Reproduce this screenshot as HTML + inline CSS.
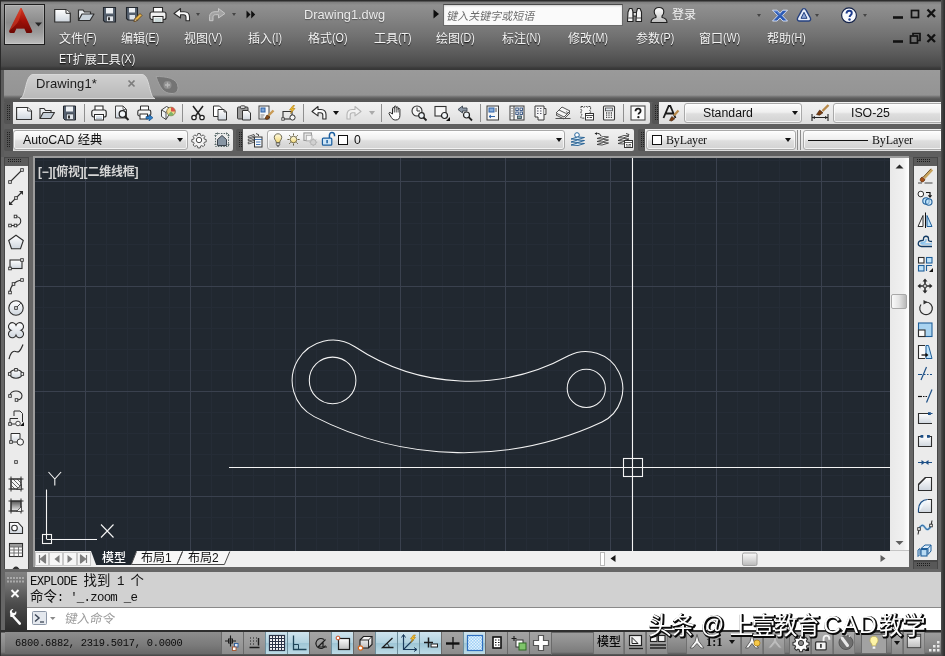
<!DOCTYPE html>
<html lang="zh"><head><meta charset="utf-8"><title>AutoCAD - Drawing1.dwg</title>
<style>
html,body{margin:0;padding:0;background:#3a3a3a;}
body{width:945px;height:656px;overflow:hidden;font-family:"Liberation Sans","Noto Sans CJK SC",sans-serif;font-size:12px;color:#111;}
#app{position:absolute;left:0;top:0;width:945px;height:656px;overflow:hidden;background:#666;will-change:transform;}
#app div{position:absolute;box-sizing:border-box;}
#app:before{content:"";position:absolute;left:0;top:70px;width:1px;height:586px;background:#303030;z-index:5;}
#app:after{content:"";position:absolute;right:0;top:70px;width:4px;height:586px;background:linear-gradient(90deg,#4f4f4f,#3a3a3a 50%,#2c2c2c);z-index:5;}
svg{display:block;overflow:visible;}
.cj{font-family:"Liberation Sans","Noto Sans CJK SC",sans-serif;}
.cjm{font-family:"Liberation Sans","Noto Sans CJK SC",sans-serif;font-weight:500;}
svg.la{display:inline-block;vertical-align:-0.13em;fill:currentColor;overflow:visible;}
.ic{width:18px;height:18px;}
.ic>svg{width:100%;height:100%;}

/* ---- title ---- */
#title{left:0;top:0;width:945px;height:70px;
 background:linear-gradient(#2c2c2c 0,#2c2c2c 1px,#7d7d7d 2px,#909090 5px,#868686 16px,#717171 36px,#5a5a5a 54px,#484848 66px,#3a3a3a 68px,#363636 70px);}
#title:before{content:"";position:absolute;left:0;top:0;width:1px;height:70px;background:#2a2a2a;}
#title:after{content:"";position:absolute;right:0;top:0;width:4px;height:70px;background:linear-gradient(90deg,#555,#2a2a2a);}
#appbtn{left:4px;top:4px;width:41px;height:41px;border:1px solid #1e1e1e;
 background:linear-gradient(#a9a9a9,#8b8b8b 45%,#9a9a9a 70%,#bdbdbd);box-shadow:inset 0 0 0 1px rgba(255,255,255,.18);}
#doctitle{left:304px;top:7px;font-size:12.8px;color:#ececec;letter-spacing:0;white-space:nowrap;text-shadow:0 1px 1px rgba(0,0,0,.35);}
#search{left:443px;top:4px;width:180px;height:22px;background:#fafafa;border:1px solid #6a6a6a;border-top-color:#4a4a4a;box-shadow:inset 0 1px 2px rgba(0,0,0,.18);}
#search i{position:absolute;left:3px;top:6px;font-size:11px;line-height:1;color:#6c6c6c;white-space:nowrap;font-style:normal;transform:skewX(-12deg);}
#login{left:672px;top:8px;font-size:12px;line-height:14px;color:#f2f2f2;white-space:nowrap;}
.menu{font-size:12px;letter-spacing:0;color:#f4f4f4;white-space:nowrap;line-height:16px;text-shadow:0 1px 1px rgba(0,0,0,.45);}
.menu svg{filter:drop-shadow(0 1px .5px rgba(0,0,0,.4));}
.tri-d{width:0;height:0;border-left:3px solid transparent;border-right:3px solid transparent;border-top:4px solid #111;}
.tri-d.lt{border-top-color:#454545;border-left-width:2.5px;border-right-width:2.5px;border-top-width:3.5px;}
.vsep{width:1px;background:rgba(60,60,60,.25);box-shadow:1px 0 0 rgba(255,255,255,.08);}

/* ---- file tab strip ---- */
#tabstrip{left:0;top:70px;width:945px;height:32px;background:linear-gradient(#9a9a9a 0,#949494 25px,#6e6e6e 27px,#585858 29px,#535353 32px);}
#tabstrip:before{content:"";position:absolute;left:0;top:0;width:4px;height:32px;background:linear-gradient(90deg,#2c2c2c 0,#3a3a3a 1px,#5c5c5c 1.5px);}
#tabstrip:after{content:"";position:absolute;right:0;top:0;width:5px;height:32px;background:linear-gradient(90deg,#5a5a5a,#2e2e2e);}
#tabtext{left:36px;top:6px;font-size:13px;color:#1c1c1c;white-space:nowrap;letter-spacing:.1px;}

/* ---- toolbars ---- */
#tbarea{left:0;top:102px;width:945px;height:55px;background:#5f5f5f;}
#tbarea:before{content:"";position:absolute;left:0;top:0;width:4px;height:55px;background:linear-gradient(90deg,#2c2c2c 0,#3a3a3a 1px,#5c5c5c 1.5px);}
#tbarea:after{content:"";position:absolute;right:0;top:0;width:4px;height:55px;background:linear-gradient(90deg,#5a5a5a,#2e2e2e);}
.tb{height:22px;background:linear-gradient(#f1f1f1,#e9e9e9 50%,#dddddd);border-radius:0 2px 2px 0;}
.grip{width:9px;height:22px;background:#545454;border-radius:2px 0 0 2px;}
.grip:after{content:"";position:absolute;left:2px;top:3px;width:4px;height:16px;background:conic-gradient(from 0deg,#222 25%,transparent 0) 0 0/2px 2px;}
.tsep{width:1px;height:18px;top:2px;background:#8f8f8f;}
.dd{height:20px;top:1px;border:1px solid #a9a9a9;border-radius:3px;background:linear-gradient(#fdfdfd,#efefef 45%,#dedede 55%,#d2d2d2);box-shadow:0 0 0 1px rgba(255,255,255,.7) inset;white-space:nowrap;}
.dd .tx{top:2px;font-size:12.3px;color:#111;line-height:15px;}
.dd .ar{right:5px;top:7px;}
.serif{font-family:"Liberation Serif",serif;}

/* ---- side toolbars ---- */
#lefttb{left:4px;top:157px;width:25px;height:412px;background:#ebebeb;border:1px solid #474747;border-bottom:0;overflow:hidden;}
#righttb{left:913px;top:157px;width:25px;height:404px;background:#ebebeb;border:1px solid #474747;overflow:hidden;}
#righttb2{left:913px;top:561px;width:25px;height:8px;background:#585858;border:1px solid #474747;border-bottom:0;}
.grip-h{left:0;top:0;width:23px;height:8px;background:#5b5b5b;}
.grip-h:after{content:"";position:absolute;left:2px;top:1px;width:14px;height:4px;background:conic-gradient(from 0deg,#1c1c1c 25%,transparent 0) 0 0/2px 2px;}
.sic{left:3px;width:16px;height:16px;}
.sic>svg{width:16px;height:16px;}

/* ---- canvas ---- */
#cvframe{left:33px;top:156px;width:876px;height:411px;background:#9c9c9c;}
#canvas{left:35px;top:158px;width:855px;height:393px;background:#212830;overflow:hidden;}
#vscroll{left:890px;top:158px;width:19px;height:393px;border-bottom:1px solid #c4c4c4;background:linear-gradient(90deg,#e9e9e9,#f0f0f0 70%,#fbfbfb 90%,#fff);}
#tabrow{left:35px;top:551px;width:874px;height:16px;background:#f0f0f0;}

/* ---- command window ---- */
#cmd{left:5px;top:572px;width:936px;height:58px;background:#d3d3d3;}
#cmdgrip{left:0;top:0;width:22px;height:58px;background:linear-gradient(#848484 0,#6e6e6e 14px,#4c4c4c 32px,#2e2e2e 58px);}
#hist{left:22px;top:0;width:914px;height:35px;background:#d1d1d1;font-family:"Liberation Mono","Noto Sans CJK SC",monospace;font-size:12.4px;letter-spacing:-.74px;line-height:15.2px;color:#101010;padding:2px 0 0 3px;white-space:pre;}
#hist .cj{font-size:13.4px;letter-spacing:0;font-family:"Liberation Mono","Noto Sans CJK SC",monospace;}
#hist div{position:static;}
#cmdin{left:22px;top:35px;width:914px;height:23px;background:#fff;border-top:1px solid #8a8a8a;}
#ph{position:absolute;left:38px;top:4px;font-size:12.5px;line-height:14px;color:#9b9b9b;white-space:nowrap;transform:skewX(-10deg);}

/* ---- status ---- */
#status{left:0;top:630px;width:945px;height:26px;background:linear-gradient(#2e2e2e 0,#2e2e2e 2px,#9c9c9c 3px,#8e8e8e 12px,#7c7c7c 22px,#5e5e5e 24px,#444 26px);}
#coords{left:5px;top:2px;width:216px;height:22px;background:linear-gradient(#8d8d8d,#7a7a7a 60%,#686868);font-family:"Liberation Mono",monospace;font-size:10.4px;color:#0c0c0c;line-height:22px;padding-left:10px;white-space:pre;letter-spacing:-.25px;}
.sb{top:2px;width:22px;height:22px;border-left:1px solid #6a6a6a;background:linear-gradient(#a4a4a4,#9a9a9a 50%,#8c8c8c);}
.sb.on{background:linear-gradient(#cfe4ee,#b3d3e0 48%,#9fc6d6 52%,#bddbe6);border-left:1px solid #6f8f9c;}
.sb>svg{position:absolute;left:2px;top:2px;width:18px;height:18px;}
#vplabel{left:3px;top:7px;font-size:12px;line-height:14px;color:#d6d6d6;white-space:nowrap;letter-spacing:-.2px;font-weight:bold;}
.ltab{top:1px;font-size:12px;line-height:13px;white-space:nowrap;color:#111;}
.sbt{top:2px;height:22px;}
.sbt.bx{background:linear-gradient(#ababab,#9d9d9d 50%,#8b8b8b);border-left:1px solid #707070;border-right:1px solid #7a7a7a;}
.sbt>svg{position:absolute;}

</style></head>
<body>
<svg width="0" height="0" style="position:absolute;left:-10px;top:-10px" aria-hidden="true"><defs><linearGradient id="gp" x1="0" y1="0" x2="0" y2="1"><stop offset="0" stop-color="#fff"/><stop offset="1" stop-color="#cfd6de"/></linearGradient><linearGradient id="gb" x1="0" y1="0" x2="1" y2="1"><stop offset="0" stop-color="#e8f4fc"/><stop offset="1" stop-color="#9fcbe8"/></linearGradient><linearGradient id="gr" x1="0" y1="0" x2="0" y2="1"><stop offset="0" stop-color="#d23b25"/><stop offset=".5" stop-color="#a41108"/><stop offset="1" stop-color="#6c0703"/></linearGradient><linearGradient id="gg" x1="0" y1="0" x2="0" y2="1"><stop offset="0" stop-color="#fff"/><stop offset="1" stop-color="#bdbdbd"/></linearGradient><linearGradient id="gy" x1="0" y1="0" x2="0" y2="1"><stop offset="0" stop-color="#fffbe0"/><stop offset="1" stop-color="#f3d977"/></linearGradient></defs></svg>
<div id="app">
<div id="title">
<div id="appbtn"><svg viewBox="0 0 39 39" style="position:absolute;left:0;top:0;width:39px;height:39px"><path d="M15.300 3.500l-11 22c-.5 1.200 0 2.400 1.400 2.400h3.600l2.200-4.300h7.800l2.100 4.300h4.300c1.400 0 1.800-1.200 1.300-2.400l-10.200-22c-.3-.6-1.200-.6-1.500 0z" fill="url(#gr)"/><path d="M15.300 3.500l-11 22c3.500-2.500 7.500-6 9.500-10 1-2.500 2-6.500 3-12-.3-.6-1.200-.6-1.500 0z" fill="#e8543a" opacity=".4"/><path d="M11.800 23.400l3.900-8.400 3.600 8.400z" fill="#8d1008" opacity=".55"/><path d="M30 17.500h7l-3.500 4z" fill="#262626"/></svg></div>
<div class="ic" style="left:54px;top:6px"><svg viewBox="0 0 18 18" ><path d="M0.7 3.5h11.3l4.3 3.800v8.700h-15.600z" fill="url(#gp)" stroke="#2f2f2f" stroke-width="1.200"/><path d="M12 3.500v3.800h4.300" fill="#fff" stroke="#2f2f2f" stroke-width="1"/></svg></div>
<div class="ic" style="left:77px;top:6px"><svg viewBox="0 0 18 18" ><path d="M1.500 14.500v-10.500h4.500l1.500 2h6v2" fill="#e9edf1" stroke="#2f2f2f" stroke-width="1.200"/><path d="M1.500 14.500l3.500-6.500h12l-4 6.500z" fill="#c9d3dc" stroke="#2f2f2f" stroke-width="1.200" stroke-linejoin="round"/></svg></div>
<div class="ic" style="left:101px;top:6px"><svg viewBox="0 0 18 18" ><path d="M2.500 1.500h12v14.500h-10.500l-1.500-1.500z" fill="#56616f" stroke="#23272d" stroke-width="1.100"/><rect x="5" y="2" width="7" height="5.500" fill="#eef1f4"/><rect x="5.500" y="10" width="7" height="5.500" fill="#dfe4ea" stroke="#2a2f36" stroke-width=".6"/><rect x="7" y="11.300" width="2" height="3" fill="#333"/></svg></div>
<div class="ic" style="left:125px;top:6px"><svg viewBox="0 0 18 18" ><path d="M1.500 1.500h11v12.500h-9.500l-1.500-1.500z" fill="#56616f" stroke="#23272d" stroke-width="1.100"/><rect x="4" y="2" width="6" height="4.500" fill="#eef1f4"/><rect x="4.500" y="9" width="5.500" height="4.500" fill="#dfe4ea"/><path d="M9 15.500l1-3 5-5 2 2-5 5z" fill="#e9b64a" stroke="#5a3b10" stroke-width=".8"/><path d="M9 15.500l1-3 2 2z" fill="#f4e3c0" stroke="#5a3b10" stroke-width=".6"/></svg></div>
<div class="ic" style="left:149px;top:6px"><svg viewBox="0 0 18 18" ><path d="M4.500 6v-4.500h9v4.500" fill="#fff" stroke="#2c2c2c" stroke-width="1.100"/><rect x="1" y="6" width="16" height="7.500" rx="2" fill="#f2f2f2" stroke="#2c2c2c" stroke-width="1.200"/><rect x="4" y="10.500" width="10" height="6" fill="#fff" stroke="#2c2c2c" stroke-width="1.100"/><path d="M5.500 13h7M5.500 15h7" stroke="#8aa" stroke-width=".8"/></svg></div>
<div class="ic" style="left:173px;top:6px"><svg viewBox="0 0 18 18" ><path d="M1 7.500l6.500-5v3.200h3.500c3.500 0 5.500 2.300 5.500 5v4h-3.500v-3.500c0-1.500-1-2.500-2.500-2.500h-3v3.300z" fill="#fafafa" stroke="#2c2c2c" stroke-width="1.100" stroke-linejoin="round"/></svg></div>
<div class="ic" style="left:208px;top:6px"><svg viewBox="0 0 18 18" ><path d="M17 7.500l-6.500-5v3.200h-3.500c-3.500 0-5.500 2.300-5.500 5v4h3.500v-3.500c0-1.500 1-2.500 2.500-2.500h3v3.300z" fill="#a2a2a2" stroke="#c6c6c6" stroke-width="1" stroke-linejoin="round"/></svg></div>
<div class="tri-d lt" style="left:196px;top:13px"></div><div class="tri-d lt" style="left:232px;top:13px"></div>
<div class="ic" style="left:246px;top:10px;width:10px;height:9px"><svg viewBox="0 0 10 9" ><path d="M0.500 0.500l4 4-4 4zM5.200 0.500l4 4-4 4z" fill="#101010"/></svg></div>
<div id="doctitle">Drawing1.dwg</div>
<div class="ic" style="left:433px;top:9px;width:7px;height:10px"><svg viewBox="0 0 7 10" ><path d="M0.500 0.500l5.500 4.500-5.500 4.500z" fill="#0c0c0c"/></svg></div>
<div id="search"><i><span class="cj">键入关键字或短语</span></i></div>
<div class="ic" style="left:626px;top:6px;width:18px;height:18px"><svg viewBox="0 0 18 18" ><path d="M2 6l1.500-3.500h2.500l1 3.500v9.500h-5.500zM10.500 6l1-3.500h2.500l1.500 3.500v9.500h-5.500z" fill="#f4f4f4" stroke="#222" stroke-width="1.100" stroke-linejoin="round"/><rect x="7.200" y="6.500" width="3.200" height="3.500" fill="#ddd" stroke="#222" stroke-width=".9"/><path d="M2.300 12h4.700M10.800 12h4.700" stroke="#222" stroke-width=".8"/></svg></div>
<div class="ic" style="left:650px;top:6px;width:18px;height:18px"><svg viewBox="0 0 18 18" ><path d="M1 16.500c0-3 2-4.500 5-5v-1.500c-1.200-1-1.800-2.500-1.800-4.200 0-2.600 1.800-4.300 4.800-4.300s4.800 1.700 4.800 4.300c0 1.700-.6 3.200-1.800 4.200v1.500c3 .5 5 2 5 5z" fill="url(#gg)" stroke="#1f1f1f" stroke-width="1.100" stroke-linejoin="round"/></svg></div>
<div id="login"><span class="cj">登录</span></div>
<div class="tri-d lt" style="left:757px;top:14px"></div>
<div class="ic" style="left:771px;top:6px;width:18px;height:18px"><svg viewBox="0 0 18 18" ><path d="M1.500 4.200h4.600l2.900 3.100 2.900-3.100h4.600l-5.200 5.400 5.200 5.400h-4.600l-2.900-3.100-2.900 3.100h-4.600l5.200-5.400z" fill="#2a59b4" stroke="#dfe8fa" stroke-width=".9" stroke-linejoin="round"/><path d="M3.400 5.200h2.300l3.300 3.500" fill="none" stroke="#7fa3e6" stroke-width=".8"/></svg></div>
<div class="ic" style="left:795px;top:6px;width:18px;height:18px"><svg viewBox="0 0 18 18" ><path d="M9 2.600c1.100 0 1.700.7 2.100 1.500l4.300 7.900c.7 1.400-.2 3-1.900 3h-9c-1.700 0-2.600-1.600-1.900-3l4.300-7.900c.4-.8 1-1.500 2.100-1.500z" fill="#e9eef9" stroke="#24407f" stroke-width="1.400"/><path d="M9 6.300l3 6h-6z" fill="#8ea6d6" stroke="#24407f" stroke-width="1"/></svg></div>
<div class="tri-d lt" style="left:815px;top:14px"></div>
<div class="ic" style="left:840px;top:6px;width:18px;height:18px"><svg viewBox="0 0 18 18" ><circle cx="9" cy="9.300" r="7.400" fill="#f7f9fd" stroke="#16244a" stroke-width="1.200"/><path d="M6.500 7.600c0-1.800 1.100-2.800 2.700-2.800s2.600.9 2.600 2.300c0 1.200-.6 1.800-1.400 2.300-.6.500-.8.800-.8 1.600" fill="none" stroke="#1c3a8c" stroke-width="1.900"/><circle cx="9.500" cy="13.500" r="1.200" fill="#1c3a8c"/></svg></div>
<div class="tri-d lt" style="left:863px;top:14px"></div>
<div class="ic" style="left:890px;top:5px;width:50px;height:44px"><svg viewBox="0 0 50 44" ><g fill="none" stroke="#121212" stroke-width="2"><path d="M3 12.500h10" stroke-width="2.600"/><rect x="21.500" y="5.500" width="7" height="7" stroke-width="1.700"/><path d="M37.500 4.500l7.500 7.500M45 4.500l-7.500 7.500" stroke-width="2.300"/><path d="M3 36.500h10" stroke-width="2.600"/><path d="M23 30.500v-2h7v7h-2" stroke-width="1.700"/><rect x="20.500" y="31" width="7" height="7" stroke-width="1.700"/><path d="M37.500 29.500l7.500 7.500M45 29.500l-7.500 7.500" stroke-width="2.300"/></g></svg></div>
<div class="menu" style="left:59px;top:31px"><span class="cj">文件</span><svg class="la" viewBox="0 0 13.71 12.20" style="width:13.71px;height:12.20px"><text x="0" y="9.76" font-size="12.20" textLength="13.71" lengthAdjust="spacingAndGlyphs">(F)</text></svg></div>
<div class="menu" style="left:121px;top:31px"><span class="cj">编辑</span><svg class="la" viewBox="0 0 14.31 12.20" style="width:14.31px;height:12.20px"><text x="0" y="9.76" font-size="12.20" textLength="14.31" lengthAdjust="spacingAndGlyphs">(E)</text></svg></div>
<div class="menu" style="left:184px;top:31px"><span class="cj">视图</span><svg class="la" viewBox="0 0 14.31 12.20" style="width:14.31px;height:12.20px"><text x="0" y="9.76" font-size="12.20" textLength="14.31" lengthAdjust="spacingAndGlyphs">(V)</text></svg></div>
<div class="menu" style="left:248px;top:31px"><span class="cj">插入</span><svg class="la" viewBox="0 0 10.13 12.20" style="width:10.13px;height:12.20px"><text x="0" y="9.76" font-size="12.20" textLength="10.13" lengthAdjust="spacingAndGlyphs">(I)</text></svg></div>
<div class="menu" style="left:308px;top:31px"><span class="cj">格式</span><svg class="la" viewBox="0 0 15.50 12.20" style="width:15.50px;height:12.20px"><text x="0" y="9.76" font-size="12.20" textLength="15.50" lengthAdjust="spacingAndGlyphs">(O)</text></svg></div>
<div class="menu" style="left:374px;top:31px"><span class="cj">工具</span><svg class="la" viewBox="0 0 13.71 12.20" style="width:13.71px;height:12.20px"><text x="0" y="9.76" font-size="12.20" textLength="13.71" lengthAdjust="spacingAndGlyphs">(T)</text></svg></div>
<div class="menu" style="left:436px;top:31px"><span class="cj">绘图</span><svg class="la" viewBox="0 0 14.90 12.20" style="width:14.90px;height:12.20px"><text x="0" y="9.76" font-size="12.20" textLength="14.90" lengthAdjust="spacingAndGlyphs">(D)</text></svg></div>
<div class="menu" style="left:502px;top:31px"><span class="cj">标注</span><svg class="la" viewBox="0 0 14.90 12.20" style="width:14.90px;height:12.20px"><text x="0" y="9.76" font-size="12.20" textLength="14.90" lengthAdjust="spacingAndGlyphs">(N)</text></svg></div>
<div class="menu" style="left:568px;top:31px"><span class="cj">修改</span><svg class="la" viewBox="0 0 16.09 12.20" style="width:16.09px;height:12.20px"><text x="0" y="9.76" font-size="12.20" textLength="16.09" lengthAdjust="spacingAndGlyphs">(M)</text></svg></div>
<div class="menu" style="left:636px;top:31px"><span class="cj">参数</span><svg class="la" viewBox="0 0 14.31 12.20" style="width:14.31px;height:12.20px"><text x="0" y="9.76" font-size="12.20" textLength="14.31" lengthAdjust="spacingAndGlyphs">(P)</text></svg></div>
<div class="menu" style="left:699px;top:31px"><span class="cj">窗口</span><svg class="la" viewBox="0 0 17.28 12.20" style="width:17.28px;height:12.20px"><text x="0" y="9.76" font-size="12.20" textLength="17.28" lengthAdjust="spacingAndGlyphs">(W)</text></svg></div>
<div class="menu" style="left:767px;top:31px"><span class="cj">帮助</span><svg class="la" viewBox="0 0 14.90 12.20" style="width:14.90px;height:12.20px"><text x="0" y="9.76" font-size="12.20" textLength="14.90" lengthAdjust="spacingAndGlyphs">(H)</text></svg></div>
<div class="menu" style="left:59px;top:52px"><svg class="la" viewBox="0 0 13.72 12.20" style="width:13.72px;height:12.20px"><text x="0" y="9.76" font-size="12.20" textLength="13.72" lengthAdjust="spacingAndGlyphs">ET</text></svg><span class="cj">扩展工具</span><svg class="la" viewBox="0 0 14.31 12.20" style="width:14.31px;height:12.20px"><text x="0" y="9.76" font-size="12.20" textLength="14.31" lengthAdjust="spacingAndGlyphs">(X)</text></svg></div>
</div>
<div id="tabstrip"><svg viewBox="0 0 200 31" style="position:absolute;left:0;top:1px;width:200px;height:31px"><defs><linearGradient id="gt" x1="0" y1="0" x2="0" y2="1"><stop offset="0" stop-color="#d0d0d0"/><stop offset="1" stop-color="#b8b8b8"/></linearGradient></defs><path d="M20 27.500c6 0 5-24 13-24h109c8 0 7 24 13 24z" fill="url(#gt)" stroke="#d8d8d8" stroke-width="1"/><path d="M128.500 9.500l6 6M134.500 9.500l-6 6" stroke="#7c7c7c" stroke-width="1.700"/><path d="M156 5.500c9 0 22 1 22 11 0 4-2 6-6 6-9 0-12-6-16-17z" fill="#747474" stroke="#a2a2a2" stroke-width="1"/><circle cx="167.500" cy="14" r="4" fill="#8f8f8f"/><path d="M165 14h5M167.500 11.500v5" stroke="#b9b9b9" stroke-width="1.400"/></svg><div id="tabtext">Drawing1*</div></div>
<div id="tbarea">
<div class="grip" style="left:4px;top:0"></div><div class="tb" style="left:13px;top:0;width:637px"></div><div class="ic" style="left:16.0px;top:3px;width:16px;height:16px"><svg viewBox="0 0 16 16" ><path d="M0.600 2.500h11l3.900 3.500v8.500h-14.900z" fill="url(#gp)" stroke="#333" stroke-width="1.100"/><path d="M11.600 2.500v3.500h3.900" fill="#fff" stroke="#333" stroke-width=".9"/></svg></div><div class="ic" style="left:39.0px;top:3px;width:16px;height:16px"><svg viewBox="0 0 16 16" ><path d="M1 13.500v-10h4l1.500 2h5.500v2" fill="#eceff2" stroke="#333" stroke-width="1.100"/><path d="M1 13.500l3.200-6h11.300l-3.700 6z" fill="#c6cfd8" stroke="#333" stroke-width="1.100" stroke-linejoin="round"/></svg></div><div class="ic" style="left:62.0px;top:3px;width:16px;height:16px"><svg viewBox="0 0 16 16" ><path d="M1.500 1h12v14h-10.500l-1.500-1.500z" fill="#566170" stroke="#22262c" stroke-width="1"/><rect x="4" y="1.500" width="7" height="5" fill="#eef1f4"/><rect x="4.500" y="9" width="7" height="5.500" fill="#dfe4ea" stroke="#2a2f36" stroke-width=".6"/><rect x="6" y="10.500" width="2" height="3" fill="#333"/></svg></div><div class="ic" style="left:91.0px;top:3px;width:16px;height:16px"><svg viewBox="0 0 16 16" ><path d="M4 5v-4h8v4" fill="#fff" stroke="#2c2c2c" stroke-width="1.100"/><rect x="0.800" y="5" width="14.400" height="7" rx="2" fill="#f4f4f4" stroke="#2c2c2c" stroke-width="1.200"/><rect x="3.500" y="9.500" width="9" height="5.500" fill="#fff" stroke="#2c2c2c" stroke-width="1"/><path d="M5 12h6M5 13.500h6" stroke="#9ab" stroke-width=".7"/></svg></div><div class="ic" style="left:114.0px;top:3px;width:16px;height:16px"><svg viewBox="0 0 16 16" ><path d="M1.500 1h7.500l3.500 3.500v8.500h-11z" fill="url(#gp)" stroke="#444" stroke-width="1"/><path d="M9 1v3.500h3.500" fill="none" stroke="#444" stroke-width=".8"/><circle cx="8.500" cy="9" r="3.300" fill="#f4f8fb" stroke="#222" stroke-width="1.300"/><path d="M11 11.500l3.500 3.500" stroke="#222" stroke-width="2"/></svg></div><div class="ic" style="left:137.0px;top:3px;width:16px;height:16px"><svg viewBox="0 0 16 16" ><path d="M3.500 5v-4h8v4" fill="#fff" stroke="#2c2c2c" stroke-width="1"/><rect x="0.800" y="5" width="13" height="6" rx="1.800" fill="#f4f4f4" stroke="#2c2c2c" stroke-width="1.100"/><rect x="3" y="9" width="7.500" height="5" fill="#fff" stroke="#2c2c2c" stroke-width="1"/><path d="M9 11.500h3v-2l4 3.200-4 3.200v-2h-3z" fill="#2c7ec8" stroke="#16477a" stroke-width=".6"/></svg></div><div class="ic" style="left:160.0px;top:3px;width:16px;height:16px"><svg viewBox="0 0 16 16" ><path d="M1.500 5l5-3.500 3 1.500v6l-3.500 5.500-4.500-3z" fill="#f0f3f6" stroke="#444" stroke-width="1"/><path d="M1.500 5l4.500 2.500v7M6 7.500l3.500-4.500" fill="none" stroke="#444" stroke-width=".9"/><circle cx="11" cy="6.500" r="4.300" fill="#f1d98a" stroke="#7a6a3a" stroke-width=".8"/><path d="M11 2.200a4.300 4.300 0 0 1 4.300 4.300h-4.300z" fill="#d9534a"/><path d="M11 6.500l-3 3a4.300 4.300 0 0 0 6 0z" fill="#7fb36a"/></svg></div><div class="ic" style="left:189.5px;top:3px;width:16px;height:16px"><svg viewBox="0 0 16 16" ><path d="M3 1l7.500 10M13 1l-7.500 10" stroke="#222" stroke-width="1.500"/><circle cx="4" cy="12.500" r="2.200" fill="#fff" stroke="#222" stroke-width="1.300"/><circle cx="12" cy="12.500" r="2.200" fill="#fff" stroke="#222" stroke-width="1.300"/></svg></div><div class="ic" style="left:212.0px;top:3px;width:16px;height:16px"><svg viewBox="0 0 16 16" ><path d="M1.500 1h6l2.500 2.500v8h-8.500z" fill="#fff" stroke="#333" stroke-width="1"/><path d="M6 4.500h6l2.500 2.500v8h-8.500z" fill="url(#gp)" stroke="#333" stroke-width="1"/><path d="M12 4.500v2.500h2.500" fill="none" stroke="#333" stroke-width=".8"/></svg></div><div class="ic" style="left:236.0px;top:3px;width:16px;height:16px"><svg viewBox="0 0 16 16" ><rect x="1.500" y="2" width="10.500" height="12" rx="1" fill="#9a9a9a" stroke="#3a3a3a" stroke-width="1"/><rect x="4.500" y="0.800" width="4.500" height="2.800" rx=".8" fill="#d8d8d8" stroke="#3a3a3a" stroke-width=".9"/><path d="M6.500 5.500h5.500l2.500 2.500v7h-8z" fill="url(#gp)" stroke="#333" stroke-width="1"/></svg></div><div class="ic" style="left:258.0px;top:3px;width:16px;height:16px"><svg viewBox="0 0 16 16" ><rect x="1" y="1" width="10" height="13" fill="#f7f7f7" stroke="#444" stroke-width="1"/><rect x="2.500" y="2.500" width="5" height="5" fill="#2f63a8"/><rect x="3.500" y="3.500" width="3" height="3" fill="#7ea6d8"/><path d="M2.500 10h4M2.500 12h3" stroke="#777" stroke-width=".9"/><path d="M15.500 5.500l-5 5" stroke="#c99b55" stroke-width="2.400"/><path d="M7 13.500l2-3.500 3 2.200-3 2.300z" fill="#8a4a14" stroke="#4c2808" stroke-width=".7"/></svg></div><div class="ic" style="left:281.0px;top:3px;width:16px;height:16px"><svg viewBox="0 0 16 16" ><path d="M1 14h2M2 14v-7.500h9v4" fill="none" stroke="#333" stroke-width="1.100"/><rect x="0.800" y="12.800" width="2.400" height="2.400" fill="#fff" stroke="#333" stroke-width=".8"/><path d="M3 14h6" stroke="#333" stroke-width="1.100"/><circle cx="11.500" cy="12.500" r="2.600" fill="#f4f4f4" stroke="#333" stroke-width="1"/><path d="M12 0.500l-3.500 4.500h2.500l-1.500 3.500 4.500-5h-2.500l2-3z" fill="#f6c12c" stroke="#a9770c" stroke-width=".6"/></svg></div><div class="ic" style="left:311.0px;top:3px;width:16px;height:16px"><svg viewBox="0 0 16 16" ><path d="M1 6.500l6-5v3h3c3.200 0 5 2.300 5 5v4.500h-3.200v-4c0-1.400-.9-2.300-2.300-2.300h-2.500v3.200z" fill="#fbfbfb" stroke="#2c2c2c" stroke-width="1.100" stroke-linejoin="round"/></svg></div><div class="ic" style="left:346.0px;top:3px;width:16px;height:16px"><svg viewBox="0 0 16 16" ><path d="M15 6.500l-6-5v3h-3c-3.200 0-5 2.300-5 5v4.500h3.200v-4c0-1.400.9-2.300 2.300-2.300h2.500v3.200z" fill="#f2f2f2" stroke="#b4b4b4" stroke-width="1.100" stroke-linejoin="round"/></svg></div><div class="ic" style="left:388.0px;top:3px;width:16px;height:16px"><svg viewBox="0 0 16 16" ><path d="M4.500 9v-5.500c0-1.300 1.800-1.300 1.800 0v-1.500c0-1.300 1.900-1.300 1.900 0v.8c0-1.300 1.900-1.300 1.900 0v1.500c0-1.200 1.800-1.200 1.800 0v6.200c0 3-1.500 4.500-4.200 4.500-2.200 0-3.200-.8-4.300-2.500l-2.300-3.700c-.6-1.100.8-1.900 1.600-1z" fill="#fdfdfd" stroke="#262626" stroke-width="1" stroke-linejoin="round"/><path d="M6.300 3.500v4M8.200 2.800v4.700M10.100 3.500v4" stroke="#262626" stroke-width=".8"/></svg></div><div class="ic" style="left:411.0px;top:3px;width:16px;height:16px"><svg viewBox="0 0 16 16" ><circle cx="6" cy="6" r="5" fill="#f7f7f7" stroke="#333" stroke-width="1.100"/><path d="M6 2.500v3.500h3" fill="none" stroke="#333" stroke-width="1"/><circle cx="10.500" cy="10.500" r="2.800" fill="#eef4f8" stroke="#222" stroke-width="1.200"/><path d="M12.500 12.500l3 3" stroke="#222" stroke-width="1.800"/></svg></div><div class="ic" style="left:434.0px;top:3px;width:16px;height:16px"><svg viewBox="0 0 16 16" ><rect x="1" y="1.500" width="11" height="9.500" fill="#f7f7f7" stroke="#333" stroke-width="1.100"/><circle cx="10.500" cy="10.500" r="3" fill="#f2f6f9" stroke="#222" stroke-width="1.200"/><path d="M16 12v4h-4z" fill="#111"/></svg></div><div class="ic" style="left:457.0px;top:3px;width:16px;height:16px"><svg viewBox="0 0 16 16" ><path d="M1 4.500l4.500-3.500v2h4.500v3h-4.500v2z" fill="#8b97a5" stroke="#3c4650" stroke-width=".9" stroke-linejoin="round"/><circle cx="9.500" cy="10" r="3" fill="#eef4f8" stroke="#222" stroke-width="1.200"/><path d="M11.700 12.200l3.300 3.300" stroke="#222" stroke-width="1.800"/></svg></div><div class="ic" style="left:485.0px;top:3px;width:16px;height:16px"><svg viewBox="0 0 16 16" ><rect x="2" y="1" width="11.500" height="14" fill="#f7f7f7" stroke="#3a3a3a" stroke-width="1"/><rect x="3.500" y="2.500" width="6" height="5" fill="#2f63a8"/><rect x="4.500" y="3.500" width="4" height="3" fill="#86abd9"/><path d="M11 3v4M11 9.500v0" stroke="#555" stroke-width="1"/><path d="M4 11.500h6M4 11.500l2-1.500M4 11.500l2 1.500" stroke="#2f63a8" stroke-width="1" fill="none"/></svg></div><div class="ic" style="left:509.0px;top:3px;width:16px;height:16px"><svg viewBox="0 0 16 16" ><rect x="1" y="1" width="14" height="14" fill="#f5f5f5" stroke="#3a3a3a" stroke-width="1"/><path d="M5 1v14" stroke="#3a3a3a" stroke-width="1"/><path d="M2.500 3.500h1M2.500 6h1M2.500 8.500h1M2.500 11h1" stroke="#555" stroke-width="1"/><rect x="6.800" y="3" width="2.500" height="2.500" fill="none" stroke="#2f4f7f" stroke-width=".9"/><rect x="11" y="3" width="2.500" height="2.500" fill="none" stroke="#2f4f7f" stroke-width=".9"/><rect x="6.800" y="7" width="2.500" height="2.500" fill="none" stroke="#2f4f7f" stroke-width=".9"/><rect x="11" y="7" width="2.500" height="2.500" fill="none" stroke="#2f4f7f" stroke-width=".9"/><rect x="8.500" y="11" width="4" height="2.500" fill="#8aa" stroke="#345" stroke-width=".8"/></svg></div><div class="ic" style="left:532.0px;top:3px;width:16px;height:16px"><svg viewBox="0 0 16 16" ><path d="M3 1h9v14h-6v-3h-3z" fill="#f6f6f6" stroke="#3a3a3a" stroke-width="1"/><path d="M12 3.500h2v6h-2" fill="#ddd" stroke="#3a3a3a" stroke-width=".9"/><path d="M5 3.500h1.500M8 3.500h1.500M5 6h1.500M8 6h1.500M5 8.500h1.500M8 8.500h1.500" stroke="#556" stroke-width="1.200"/></svg></div><div class="ic" style="left:555.0px;top:3px;width:16px;height:16px"><svg viewBox="0 0 16 16" ><path d="M1 10l6-6 8 4-6 6z" fill="#e8e8e8" stroke="#444" stroke-width=".9"/><path d="M1 8l6-6 8 4-6 6z" fill="#f7f7f7" stroke="#444" stroke-width=".9"/><path d="M4 5l6.500 3.200c1.500.8 2.500-1 1-1.800" fill="none" stroke="#444" stroke-width=".9"/><path d="M0.500 13.500h15" stroke="#555" stroke-width="1"/></svg></div><div class="ic" style="left:578.0px;top:3px;width:16px;height:16px"><svg viewBox="0 0 16 16" ><path d="M3 1.500h2c0 1.200 1.600 1.200 1.600 0h2.400c0 1.200 1.600 1.200 1.600 0h2v3c-1.200 0-1.200 1.600 0 1.600v2h-2v5h-7.600v-2.500c1.200 0 1.200-1.600 0-1.600v-2.500c1.200 0 1.200-1.600 0-1.600z" fill="#f6f6f6" stroke="#444" stroke-width="1" stroke-dasharray="2 1"/><rect x="7.500" y="8.500" width="8" height="6.500" fill="#fff" stroke="#333" stroke-width="1"/><path d="M7.500 10.500h8M9 12.500h1.500M11.500 12.500h2.500" stroke="#333" stroke-width=".9"/></svg></div><div class="ic" style="left:600.5px;top:3px;width:16px;height:16px"><svg viewBox="0 0 16 16" ><rect x="2.500" y="1" width="11" height="14" rx="1" fill="#f4f4f4" stroke="#3a3a3a" stroke-width="1.100"/><rect x="4.500" y="3" width="7" height="2.800" fill="#dfe7ee" stroke="#444" stroke-width=".8"/><path d="M5 8h1.200M7.400 8h1.200M9.800 8h1.200M5 10.200h1.200M7.400 10.200h1.200M9.800 10.200h1.200M5 12.400h1.200M7.400 12.400h1.200M9.800 12.400h1.200" stroke="#444" stroke-width="1.300"/></svg></div><div class="ic" style="left:630.0px;top:3px;width:16px;height:16px"><svg viewBox="0 0 16 16" ><rect x="1" y="1" width="14" height="14" fill="#fbfbfb" stroke="#4a4a4a" stroke-width="1.100"/><path d="M5.500 6.300c0-1.700 1.100-2.600 2.600-2.600s2.500.9 2.500 2.200c0 1.100-.6 1.600-1.300 2.200-.6.4-.8.800-.8 1.500" fill="none" stroke="#1a1a1a" stroke-width="1.800"/><circle cx="8.400" cy="12.200" r="1.150" fill="#1a1a1a"/></svg></div><div class="tsep" style="left:84px;top:2px"></div><div class="tsep" style="left:182px;top:2px"></div><div class="tsep" style="left:303px;top:2px"></div><div class="tsep" style="left:381px;top:2px"></div><div class="tsep" style="left:480px;top:2px"></div><div class="tsep" style="left:623px;top:2px"></div><div class="tri-d " style="left:333px;top:9px"></div><div class="tri-d" style="left:369px;top:9px;border-top-color:#aaa"></div><div class="grip" style="left:652px;top:0;width:7px"></div><div class="tb" style="left:659px;top:0;width:282px;border-radius:0"></div><div class="ic" style="left:662.0px;top:2px;width:18px;height:18px"><svg viewBox="0 0 18 18" ><path d="M1.500 14l5.200-12h1.600l5.200 12M3.800 9.500h7.400" fill="none" stroke="#1c1c1c" stroke-width="1.800"/><path d="M16.500 6.500l-4.500 5" stroke="#b98a4a" stroke-width="2.200"/><path d="M7.500 16.500l2.300-4 3 2.300-3 2.200z" fill="#7a3d10" stroke="#40200a" stroke-width=".6"/></svg></div><div class="dd" style="left:684px;width:118px"><div class="tx" style="left:18px">Standard</div><div class="tri-d " style="left:107px;top:7px"></div></div><div class="ic" style="left:810.0px;top:2px;width:20px;height:18px"><svg viewBox="0 0 20 18" ><path d="M2 10v7M18 10v7M2 13.500h16" stroke="#222" stroke-width="1.100"/><path d="M2 13.500l3-1.500v3zM18 13.500l-3-1.500v3z" fill="#222"/><path d="M18.500 1l-6 6" stroke="#b98a4a" stroke-width="2.400"/><path d="M6.500 10.500l3.200-4.500 3.300 2.800-3.500 2.400z" fill="#7a3d10" stroke="#40200a" stroke-width=".6"/></svg></div><div class="dd" style="left:833px;width:109px;border-radius:3px 0 0 3px"><div class="tx" style="left:17px">ISO-25</div></div><div class="grip" style="left:4px;top:27px"></div><div class="tb" style="left:13px;top:27px;width:220px"></div><div class="dd" style="left:13px;top:28px;width:175px"><div class="tx" style="left:9px;top:2px">AutoCAD <span class="cj">经典</span></div><div class="tri-d " style="left:163px;top:7px"></div></div><div class="ic" style="left:190.5px;top:30px;width:16px;height:16px"><svg viewBox="0 0 16 16" ><path d="M6.700 0.800h2.600l.4 2 1.300.6 1.700-1.100 1.800 1.800-1.100 1.700.6 1.300 2 .4v2.600l-2 .4-.6 1.300 1.100 1.700-1.800 1.800-1.700-1.100-1.300.6-.4 2h-2.600l-.4-2-1.300-.6-1.700 1.100-1.800-1.800 1.100-1.700-.6-1.300-2-.4v-2.600l2-.4.600-1.300-1.100-1.700 1.800-1.800 1.700 1.100 1.300-.6z" fill="#f2f2f2" stroke="#4a4a4a" stroke-width="1" stroke-linejoin="round" transform="translate(.8 .8) scale(.9)"/><circle cx="8" cy="8" r="2.700" fill="#fff" stroke="#4a4a4a" stroke-width="1"/></svg></div><div class="ic" style="left:214.0px;top:30px;width:16px;height:16px"><svg viewBox="0 0 16 16" ><rect x="1.500" y="1.500" width="13" height="13" fill="none" stroke="#566" stroke-width="1" stroke-dasharray="1.500 1.200"/><path d="M3.500 13.500v-6l4.500-4 4.500 4v6z" fill="#8795a3" stroke="#3a434c" stroke-width="1"/><path d="M0.500 3.500h2M13.500 3.500h2M3.500 0.500v2M12.500 0.500v2M0.500 12.500h2M13.500 12.500h2" stroke="#566" stroke-width=".9"/></svg></div><div class="grip" style="left:236px;top:27px;width:7px"></div><div class="tb" style="left:243px;top:27px;width:391px"></div><div class="ic" style="left:247.0px;top:30px;width:16px;height:16px"><svg viewBox="0 0 16 16" ><path d="M1 4.500l6-2 .5 1.500-6 2zM1 7.500l6-2 .5 1.500-6 2zM1 10.500l6-2 .5 1.500-6 2z" fill="#fff" stroke="#333" stroke-width=".8"/><rect x="7.500" y="5" width="7.500" height="10" fill="#f4f8fb" stroke="#333" stroke-width="1"/><path d="M7.500 7.500h7.500M9 10h4.500M9 12.500h4.500" stroke="#36a" stroke-width=".9"/><path d="M9 1.500l3 1.500-1 1" stroke="#333" fill="none" stroke-width=".9"/></svg></div><div class="dd" style="left:267px;top:28px;width:298px"><div class="ic" style="left:5.0px;top:2px;width:10px;height:14px"><svg viewBox="0 0 12 18" ><path d="M6 1c-2.800 0-4.800 2-4.800 4.700 0 2 1.100 3 1.900 4.300.5.800.6 1.500.6 2.500h4.600c0-1 .1-1.700.6-2.500.8-1.300 1.900-2.300 1.900-4.300 0-2.700-2-4.700-4.800-4.700z" fill="url(#gy)" stroke="#4a4532" stroke-width="1"/><rect x="3.800" y="12.800" width="4.400" height="3.200" rx=".8" fill="#d9d9d9" stroke="#444" stroke-width=".9"/><path d="M4.800 17h2.400" stroke="#333" stroke-width="1"/></svg></div><div class="ic" style="left:19.0px;top:2px;width:13px;height:13px"><svg viewBox="0 0 16 16" ><circle cx="8" cy="8" r="4" fill="url(#gy)" stroke="#5a5332" stroke-width="1"/><path d="M8 0.500v2.500M8 13v2.500M0.500 8h2.500M13 8h2.500M2.700 2.700l1.800 1.800M11.500 11.500l1.800 1.800M13.300 2.700l-1.800 1.800M4.500 11.500l-1.800 1.800" stroke="#5a5332" stroke-width="1.100"/></svg></div><div class="ic" style="left:35.0px;top:1px;width:15px;height:15px"><svg viewBox="0 0 16 16" ><rect x="1" y="1" width="8" height="8" fill="#eee" stroke="#9a9a9a" stroke-width="1.200"/><rect x="3.500" y="3.500" width="6" height="6" fill="#f6f6f6" stroke="#aaa" stroke-width="1"/><circle cx="11" cy="11" r="3" fill="#d0d0d0" stroke="#b0b0b0" stroke-width="1"/><path d="M11 6.800v1.400M11 13.800v1.400M6.800 11h1.400M13.800 11h1.400M8 8l1 1M13 13l1 1M14 8l-1 1M8 14l1-1" stroke="#b5b5b5" stroke-width="1"/></svg></div><div class="ic" style="left:53.0px;top:0px;width:15px;height:15px"><svg viewBox="0 0 16 16" ><path d="M9 7.500v-3c0-1.800 1.100-3 2.700-3s2.700 1.200 2.700 3v1" fill="none" stroke="#1b5e9e" stroke-width="1.600"/><rect x="1.500" y="7.500" width="10" height="7.500" rx="1" fill="#cfe6f7" stroke="#1b5e9e" stroke-width="1.300"/><path d="M6.500 9.500v3.500" stroke="#1b5e9e" stroke-width="1.600"/></svg></div><div style="left:70px;top:4px;width:10px;height:10px;background:#fff;border:1px solid #111"></div><div class="tx" style="left:86px;top:2px">0</div><div class="tri-d " style="left:288px;top:7px"></div></div><div class="ic" style="left:569.5px;top:30px;width:16px;height:16px"><svg viewBox="0 0 16 16" ><circle cx="7" cy="3" r="2.300" fill="#fff" stroke="#27689f" stroke-width="1"/><path d="M1 7l6.500-2 7 .5-6.500 2zM1 10l6.500-2 7 .5-6.500 2zM1 13l6.500-2 7 .5-6.500 2z" fill="#dff0fb" stroke="#1d5a8f" stroke-width=".9" stroke-linejoin="round"/></svg></div><div class="ic" style="left:593.5px;top:30px;width:16px;height:16px"><svg viewBox="0 0 16 16" ><path d="M3 6.500l6.500-2 5 .5-6.500 2zM3 9.500l6.500-2 5 .5-6.500 2zM3 12.500l6.500-2 5 .5-6.500 2z" fill="#fdfdfd" stroke="#3a3a3a" stroke-width=".9" stroke-linejoin="round"/><path d="M1.500 1.500c3-.5 5 .5 5.500 2.500" fill="none" stroke="#222" stroke-width="1"/><path d="M0.500 1.500l2.500-1.300v2.800z" fill="#222"/></svg></div><div class="ic" style="left:616.5px;top:30px;width:16px;height:16px"><svg viewBox="0 0 16 16" ><path d="M1 5.500l6-2 5 .5-6 2zM1 8.500l6-2 5 .5-6 2zM1 11.500l6-2 5 .5-6 2z" fill="#fdfdfd" stroke="#3a3a3a" stroke-width=".9" stroke-linejoin="round"/><rect x="7.500" y="8.500" width="8" height="7" fill="#fff" stroke="#333" stroke-width="1"/><path d="M7.500 10.500h8M9 12.500h1.500M11.500 12.500h2.500M9 14h5" stroke="#333" stroke-width=".8"/><path d="M9 1.500l3 1-1 1.200" stroke="#333" fill="none" stroke-width=".9"/></svg></div><div class="grip" style="left:638px;top:27px;width:7px"></div><div class="tb" style="left:645px;top:27px;width:296px;border-radius:0"></div><div class="dd" style="left:646px;top:28px;width:150px"><div style="left:5px;top:4px;width:10px;height:10px;background:#fff;border:1px solid #111"></div><div class="tx serif" style="left:19px;top:2px;font-size:12px;letter-spacing:-.15px">ByLayer</div><div class="tri-d " style="left:138px;top:7px"></div></div><div style="left:797px;top:28px;width:1px;height:20px;background:#8b8b8b"></div><div style="left:800px;top:28px;width:1px;height:20px;background:#8b8b8b"></div><div class="dd" style="left:803px;top:28px;width:139px;border-radius:3px 0 0 3px"><div style="left:4px;top:9px;width:60px;height:1px;background:#111"></div><div class="tx serif" style="left:68px;top:2px;font-size:12px;letter-spacing:-.15px">ByLayer</div></div>
</div>
<div id="lefttb"><div class="grip-h"></div><div class="sic" style="top:10px"><svg viewBox="0 0 16 16" ><path d="M2 14l12-12" stroke="#2e2e2e" stroke-width="1.100"/><rect x="0.7" y="12.7" width="2.600" height="2.600" fill="#fff" stroke="#2e2e2e" stroke-width=".9"/><rect x="12.7" y="0.7" width="2.600" height="2.600" fill="#fff" stroke="#2e2e2e" stroke-width=".9"/></svg></div><div class="sic" style="top:32px"><svg viewBox="0 0 16 16" ><path d="M1.500 14.500l13-13" stroke="#2e2e2e" stroke-width="1.100"/><path d="M15 1v4l-4-4zM1 15v-4l4 4z" fill="#2e2e2e"/><rect x="6.7" y="6.7" width="2.600" height="2.600" fill="#fff" stroke="#2e2e2e" stroke-width=".9"/></svg></div><div class="sic" style="top:54px"><svg viewBox="0 0 16 16" ><path d="M2 13.500h5.500M7.500 13.500c7 0 7-9 0-9" fill="none" stroke="#2e2e2e" stroke-width="1.100"/><rect x="0.7" y="12.200" width="2.600" height="2.600" fill="#fff" stroke="#2e2e2e" stroke-width=".9"/><rect x="6.200" y="12.200" width="2.600" height="2.600" fill="#fff" stroke="#2e2e2e" stroke-width=".9"/><rect x="6.200" y="3.200" width="2.600" height="2.600" fill="#fff" stroke="#2e2e2e" stroke-width=".9"/></svg></div><div class="sic" style="top:76px"><svg viewBox="0 0 16 16" ><path d="M8 1.200l7.300 5.300-2.800 8.300h-9l-2.800-8.300z" fill="url(#gp)" stroke="#2e2e2e" stroke-width="1.100"/></svg></div><div class="sic" style="top:98px"><svg viewBox="0 0 16 16" ><rect x="2" y="4" width="12" height="8.500" fill="url(#gp)" stroke="#2e2e2e" stroke-width="1.100"/><rect x="0.7" y="11.200" width="2.600" height="2.600" fill="#fff" stroke="#2e2e2e" stroke-width=".9"/><rect x="12.7" y="2.700" width="2.600" height="2.600" fill="#fff" stroke="#2e2e2e" stroke-width=".9"/></svg></div><div class="sic" style="top:120px"><svg viewBox="0 0 16 16" ><path d="M2 14.500c0-6 5-12 12-12.500" fill="none" stroke="#2e2e2e" stroke-width="1.100"/><rect x="0.7" y="13.200" width="2.600" height="2.600" fill="#fff" stroke="#2e2e2e" stroke-width=".9"/><rect x="4.200" y="4.700" width="2.600" height="2.600" fill="#fff" stroke="#2e2e2e" stroke-width=".9"/><rect x="12.7" y="0.7" width="2.600" height="2.600" fill="#fff" stroke="#2e2e2e" stroke-width=".9"/></svg></div><div class="sic" style="top:142px"><svg viewBox="0 0 16 16" ><circle cx="8" cy="8" r="7.200" fill="url(#gp)" stroke="#2e2e2e" stroke-width="1.100"/><path d="M8 8l4.800-4.800" stroke="#2e2e2e" stroke-width=".9"/><rect x="6.7" y="6.7" width="2.600" height="2.600" fill="#fff" stroke="#2e2e2e" stroke-width=".9"/></svg></div><div class="sic" style="top:164px"><svg viewBox="0 0 16 16" ><path d="M8 3.200a3.900 3.900 0 1 1 5 5 3.900 3.900 0 1 1-5 5 3.900 3.900 0 1 1-5-5 3.900 3.900 0 1 1 5-5z" fill="url(#gp)" stroke="#2e2e2e" stroke-width="1.100"/></svg></div><div class="sic" style="top:186px"><svg viewBox="0 0 16 16" ><path d="M1 15.200c1-5 3.500-9 6.500-7.700s4.500 .2 7.500-7" fill="none" stroke="#2e2e2e" stroke-width="1.200"/></svg></div><div class="sic" style="top:208px"><svg viewBox="0 0 16 16" ><ellipse cx="8" cy="8" rx="6.300" ry="4.200" fill="url(#gp)" stroke="#2e2e2e" stroke-width="1.100"/><rect x="0.4" y="6.700" width="2.600" height="2.600" fill="#fff" stroke="#2e2e2e" stroke-width=".9"/><rect x="6.700" y="2.500" width="2.600" height="2.600" fill="#fff" stroke="#2e2e2e" stroke-width=".9"/><rect x="13.0" y="6.700" width="2.600" height="2.600" fill="#fff" stroke="#2e2e2e" stroke-width=".9"/></svg></div><div class="sic" style="top:230px"><svg viewBox="0 0 16 16" ><path d="M2 7.500c0-3 3-4.500 6-4.500s6 2 6 4.500-2 4.500-5.500 4.500" fill="none" stroke="#2e2e2e" stroke-width="1.100"/><rect x="0.7" y="6.700" width="2.600" height="2.600" fill="#fff" stroke="#2e2e2e" stroke-width=".9"/><rect x="7.200" y="10.700" width="2.600" height="2.600" fill="#fff" stroke="#2e2e2e" stroke-width=".9"/></svg></div><div class="sic" style="top:252px"><svg viewBox="0 0 16 16" ><path d="M6 6v-5h6l2.500 2.500v8.500" fill="none" stroke="#2e2e2e" stroke-width="1"/><path d="M2 14v-5.500h8" fill="none" stroke="#2e2e2e" stroke-width="1"/><path d="M2.500 14h5" stroke="#2e2e2e" stroke-width="1"/><circle cx="10" cy="13.500" r="2.300" fill="#f3f3f3" stroke="#2e2e2e" stroke-width=".9"/><path d="M16 12v4h-4z" fill="#111"/><rect x="0.7" y="12.700" width="2.600" height="2.600" fill="#fff" stroke="#2e2e2e" stroke-width=".9"/></svg></div><div class="sic" style="top:274px"><svg viewBox="0 0 16 16" ><path d="M3 10v-8.500h9v5" fill="url(#gp)" stroke="#2e2e2e" stroke-width="1"/><path d="M3 10h6" stroke="#2e2e2e" stroke-width="1"/><circle cx="12.300" cy="10" r="3.200" fill="#f6f6f6" stroke="#2e2e2e" stroke-width="1"/><rect x="1.700" y="8.700" width="2.600" height="2.600" fill="#fff" stroke="#2e2e2e" stroke-width=".9"/></svg></div><div class="sic" style="top:296px"><svg viewBox="0 0 16 16" ><rect x="6.700" y="6.700" width="2.600" height="2.600" fill="#fff" stroke="#2e2e2e" stroke-width=".9"/></svg></div><div class="sic" style="top:318px"><svg viewBox="0 0 16 16" ><rect x="3" y="3" width="10" height="10" fill="#f3f3f3" stroke="#2e2e2e" stroke-width="1"/><path d="M3 9l4 4M3 5l8 8M5 3l8 8M9 3l4 4" stroke="#555" stroke-width=".9"/><path d="M0.500 3h15M0.500 13h15M3 0.500v15M13 0.500v15" stroke="#2e2e2e" stroke-width="1"/><path d="M8.500 13.500l5-5v5z" fill="#999" stroke="#2e2e2e" stroke-width=".7"/></svg></div><div class="sic" style="top:340px"><svg viewBox="0 0 16 16" ><defs><linearGradient id="gh" x1="0" y1="0" x2="0" y2="1"><stop offset="0" stop-color="#555"/><stop offset="1" stop-color="#eee"/></linearGradient></defs><rect x="3" y="3" width="10" height="10" fill="url(#gh)" stroke="#2e2e2e" stroke-width="1"/><path d="M0.500 3h15M0.500 13h15M3 0.500v15M13 0.500v15" stroke="#2e2e2e" stroke-width="1"/><path d="M8.500 13.500l5-5v5z" fill="#eee" stroke="#2e2e2e" stroke-width=".7"/></svg></div><div class="sic" style="top:362px"><svg viewBox="0 0 16 16" ><path d="M1.500 2.500h8.500l4.500 5v6h-13z" fill="url(#gp)" stroke="#2e2e2e" stroke-width="1.100"/><circle cx="6.500" cy="8" r="2.800" fill="#fff" stroke="#2e2e2e" stroke-width="1.100"/></svg></div><div class="sic" style="top:384px"><svg viewBox="0 0 16 16" ><rect x="1.500" y="1.500" width="13" height="13" fill="#fbfbfb" stroke="#2e2e2e" stroke-width="1.100"/><rect x="2" y="2" width="12" height="3" fill="#9a9a9a"/><path d="M1.500 5h13M1.500 8h13M1.500 11h13M6 5v9.500M10.500 5v9.500" stroke="#666" stroke-width=".9"/></svg></div><div class="sic" style="top:406px"><svg viewBox="0 0 16 16" ><path d="M5 6c0-4 6-4 6 0" fill="#333" stroke="#2e2e2e"/></svg></div></div>
<div id="righttb"><div class="grip-h"></div><div class="sic" style="top:10px"><svg viewBox="0 0 16 16" ><path d="M15 1.500l-8 8.500" stroke="#c9a45e" stroke-width="3"/><path d="M14 0.800l-8 8.500" stroke="#4a3216" stroke-width=".7"/><path d="M4 13.500c-1.500-1.500-.8-3.500 1.200-4.500l2.800 2.600c-.8 2-2.600 3-4 1.900z" fill="#a34f16" stroke="#5a2808" stroke-width=".7"/><path d="M1 15h4M7.500 15h8" stroke="#333" stroke-width=".9"/></svg></div><div class="sic" style="top:32px"><svg viewBox="0 0 16 16" ><circle cx="3.800" cy="4" r="2.800" fill="#fbfbfb" stroke="#2e2e2e" stroke-width="1"/><path d="M9 2.500h4v3" fill="none" stroke="#111" stroke-width="1.200"/><path d="M13 8l-2.200-2.800h4.400z" fill="#111"/><circle cx="9" cy="11" r="3.200" fill="#bfe3fa" stroke="#1f5f9a" stroke-width="1.100"/><circle cx="11.800" cy="12" r="3.200" fill="#bfe3fa" fill-opacity=".6" stroke="#1f5f9a" stroke-width="1.100"/></svg></div><div class="sic" style="top:54px"><svg viewBox="0 0 16 16" ><path d="M8.500 0.500v15.500" stroke="#111" stroke-width="1"/><path d="M6 3.500v11h-5z" fill="#fbfbfb" stroke="#2e2e2e" stroke-width="1"/><path d="M10 3.500v11h5z" fill="#bfe3fa" stroke="#1f5f9a" stroke-width="1"/></svg></div><div class="sic" style="top:76px"><svg viewBox="0 0 16 16" ><path d="M15 12.500h-10.500c-4.500 0-4.500-6 1-6 .5 0 1 0 1-1v-1c0-3 5-3 5 0v1.500c0 1 1 1.500 3.500 1.500" fill="none" stroke="#123a63" stroke-width="1.300"/><path d="M15 10h-10c-1.500 0-1.500-1.500.5-1.500 2 0 3.500-.5 3.500-2.500v-1" fill="none" stroke="#8cc4ee" stroke-width="1.500"/></svg></div><div class="sic" style="top:98px"><svg viewBox="0 0 16 16" ><rect x="1.500" y="1.500" width="5.500" height="5.500" fill="#fbfbfb" stroke="#2e2e2e" stroke-width="1.100"/><rect x="9.500" y="1.500" width="5.500" height="5.500" fill="#bfe3fa" stroke="#1f5f9a" stroke-width="1.100"/><rect x="1.500" y="9.500" width="5.500" height="5.500" fill="#bfe3fa" stroke="#1f5f9a" stroke-width="1.100"/><path d="M9.500 15v-5.500h5.500" fill="none" stroke="#1f5f9a" stroke-width="1.100"/><path d="M16 12v4h-4z" fill="#111"/></svg></div><div class="sic" style="top:120px"><svg viewBox="0 0 16 16" ><path d="M8 0.500l2.500 3h-1.700v2.800h-1.600v-2.800h-1.700zM8 15.500l2.500-3h-1.700v-2.800h-1.600v2.800h-1.700zM0.500 8l3-2.500v1.700h2.800v1.600h-2.800v1.700zM15.500 8l-3-2.500v1.700h-2.800v1.600h2.800v1.700z" fill="#2a2a2a"/><rect x="6.700" y="6.700" width="2.600" height="2.600" fill="#fff" stroke="#2a2a2a" stroke-width=".9"/></svg></div><div class="sic" style="top:142px"><svg viewBox="0 0 16 16" ><path d="M9 2a6.300 6.300 0 1 1-5 2.500" fill="none" stroke="#2e2e2e" stroke-width="1.200"/><path d="M6.500 0l4 2.200-4 2.300z" fill="#2e2e2e"/></svg></div><div class="sic" style="top:164px"><svg viewBox="0 0 16 16" ><rect x="1.500" y="1" width="13.500" height="13.500" fill="#a9d3f0" stroke="#1f5f9a" stroke-width="1.100"/><rect x="1.500" y="8" width="6.500" height="6.500" fill="#fbfbfb" stroke="#2e2e2e" stroke-width="1.100"/><rect x="0.500" y="7" width="8.500" height="8.500" fill="none" stroke="#ebebeb" stroke-width="1" opacity="0"/></svg></div><div class="sic" style="top:186px"><svg viewBox="0 0 16 16" ><path d="M9 1.500h2.500l3.500 13h-6z" fill="#bfe3fa" stroke="#1f5f9a" stroke-width="1"/><path d="M8 1.500h-6.500v13h6.500" fill="#fbfbfb" stroke="#2e2e2e" stroke-width="1.100"/><path d="M4.500 11h5" stroke="#111" stroke-width="1.300"/><path d="M11.500 11l-3-2.200v4.400z" fill="#111"/></svg></div><div class="sic" style="top:208px"><svg viewBox="0 0 16 16" ><path d="M1 8.500h4M7 8.500h1.500M10 8.500h1.500M13 8.500h2" stroke="#1d4f86" stroke-width="1"/><path d="M9.500 1l-5.500 13" stroke="#1d4f86" stroke-width="1.200"/></svg></div><div class="sic" style="top:230px"><svg viewBox="0 0 16 16" ><path d="M1 8.500h4" stroke="#111" stroke-width="1.200"/><path d="M6 8.500h1.500M8.500 8.500h1.500" stroke="#111" stroke-width="1"/><path d="M15 1.500l-5.500 13" stroke="#1d4f86" stroke-width="1.200"/></svg></div><div class="sic" style="top:252px"><svg viewBox="0 0 16 16" ><path d="M11 3.500h-9.500v10h13.500" fill="url(#gp)" stroke="#2e2e2e" stroke-width="1.100"/><rect x="11" y="2.200" width="2.800" height="2.800" fill="#1d4f86"/><path d="M13.500 3.500h2" stroke="#1d4f86" stroke-width="1"/></svg></div><div class="sic" style="top:274px"><svg viewBox="0 0 16 16" ><path d="M4 4.500h-2.500v10h13v-10h-2.500" fill="url(#gp)" stroke="#2e2e2e" stroke-width="1.100"/><rect x="3.500" y="3" width="2.800" height="2.800" fill="#1d4f86"/><rect x="10" y="3" width="2.800" height="2.800" fill="#1d4f86"/></svg></div><div class="sic" style="top:296px"><svg viewBox="0 0 16 16" ><path d="M1 8.500h14" stroke="#1d4f86" stroke-width="1"/><path d="M4.500 6l3.500 2.500-3.500 2.500zM11.500 6l-3.500 2.500 3.500 2.500z" fill="#1d4f86"/></svg></div><div class="sic" style="top:318px"><svg viewBox="0 0 16 16" ><path d="M1.500 8.500l7-7h6v13h-13z" fill="url(#gp)" stroke="#2e2e2e" stroke-width="1.100"/><path d="M1.500 8.500l7-7" stroke="#2e2e2e" stroke-width="1.300"/></svg></div><div class="sic" style="top:340px"><svg viewBox="0 0 16 16" ><path d="M1.500 14.500h13v-13h-4" fill="url(#gp)" stroke="#2e2e2e" stroke-width="1.100"/><path d="M1.500 14.500v-3c0-6 4-10 9-10" fill="#eef6fc" stroke="#1d4f86" stroke-width="1.200"/></svg></div><div class="sic" style="top:362px"><svg viewBox="0 0 16 16" ><path d="M2 9c1.500-4 4-5 6-1.500s4.500 2 6-2" fill="none" stroke="#7fb6e0" stroke-width="2.200"/><path d="M2 9c1.500-4 4-5 6-1.500s4.500 2 6-2" fill="none" stroke="#1d4f86" stroke-width=".9"/><path d="M2 9.500l-1 5M14 5.500l1-5" stroke="#2e2e2e" stroke-width="1.100"/><rect x="0.7" y="7.700" width="2.600" height="2.600" fill="#fff" stroke="#2e2e2e" stroke-width=".9"/><rect x="12.7" y="4.200" width="2.600" height="2.600" fill="#fff" stroke="#2e2e2e" stroke-width=".9"/></svg></div><div class="sic" style="top:384px"><svg viewBox="0 0 16 16" ><path d="M4 6.500l4-3.500h6l-3 3.500zM11 6.500v6l3-3.500v-6M1 8l2-1.500v6l-2 2z" fill="#dcedfa" stroke="#1f5f9a" stroke-width="1" stroke-linejoin="round"/><rect x="4" y="7.500" width="6" height="6.500" fill="#b9dcf5" stroke="#1f5f9a" stroke-width="1.100"/></svg></div></div>
<div id="righttb2"><div class="grip-h" style="background:none"></div></div>
<div id="cvframe"></div>
<div id="canvas"><svg viewBox="0 0 855 393" style="position:absolute;left:0;top:0;width:855px;height:393px" shape-rendering="auto"><path d="M8.500 0V393M29.500 0V393M71.500 0V393M92.500 0V393M113.500 0V393M134.500 0V393M176.500 0V393M197.500 0V393M218.500 0V393M239.500 0V393M281.500 0V393M302.500 0V393M323.500 0V393M344.500 0V393M386.500 0V393M407.500 0V393M428.500 0V393M449.500 0V393M491.500 0V393M512.500 0V393M533.500 0V393M554.500 0V393M596.500 0V393M617.500 0V393M639.500 0V393M660.500 0V393M702.500 0V393M723.500 0V393M744.500 0V393M765.500 0V393M807.500 0V393M828.500 0V393M849.500 0V393M0 2.500H855M0 44.500H855M0 65.500H855M0 86.500H855M0 107.500H855M0 149.500H855M0 170.500H855M0 191.500H855M0 212.500H855M0 254.500H855M0 275.500H855M0 296.500H855M0 317.500H855M0 359.500H855M0 380.500H855" stroke="#252c36" stroke-width="1" fill="none"/><path d="M50.500 0V393M155.500 0V393M260.500 0V393M365.500 0V393M470.500 0V393M575.500 0V393M681.500 0V393M786.500 0V393M0 23.500H855M0 128.500H855M0 233.500H855M0 338.500H855" stroke="#3a414e" stroke-width="1" fill="none"/><g transform="translate(-35 -158)" fill="none" stroke="#f2f2f2" stroke-width="1.050"><path d="M354.900 346.700 A206.900 206.900 0 0 0 568.500 355.800 A37.100 37.100 0 1 1 602.0 422.0 A327.400 327.400 0 0 1 314.200 416.600 A40.500 40.500 0 1 1 354.900 346.700Z"/><circle cx="332.600" cy="380.400" r="23.300"/><circle cx="586.300" cy="388.400" r="19.100"/></g><g transform="translate(-35 -158)" fill="none" stroke="#f4f4f4" stroke-width="1.100"><path d="M229 467.500H890M632.500 158V551"/><rect x="623.500" y="458.500" width="19" height="18" fill="none"/><path d="M229 467.500H623.500M641.500 467.500H890M632.500 158V458.500M632.500 476.500V551" stroke="none"/><path d="M46.500 539V489.500M46.500 539.500H97" stroke-width="1.100"/><rect x="42.500" y="534.500" width="9" height="9" fill="#212830"/><path d="M46.500 539V534.500M46.500 539.500H51.500" /><path d="M48.500 472l6.300 7 6.300-7M54.800 479v6.500" stroke-width="1.100"/><path d="M101 524.500l12.500 13M113.500 524.500l-12.500 13" stroke-width="1.100"/></g></svg><div id="vplabel">[−][<span class="cj">俯视</span>][<span class="cj">二维线框</span>]</div></div>
<div id="vscroll"><svg viewBox="0 0 19 393" style="position:absolute;left:0;top:0;width:19px;height:393px"><defs><linearGradient id="gtv" x1="0" y1="0" x2="1" y2="0"><stop offset="0" stop-color="#fbfbfb"/><stop offset=".5" stop-color="#e4e4e4"/><stop offset="1" stop-color="#b6b6b6"/></linearGradient></defs><path d="M5.500 10.500h8l-4-4z" fill="#2a2a2a"/><path d="M5.500 383h8l-4 4z" fill="#5e5e5e"/><rect x="1.500" y="136.500" width="15" height="14" rx="1.500" fill="url(#gtv)" stroke="#a8a8a8" stroke-width="1"/></svg></div>
<div id="tabrow"><svg viewBox="0 0 874 16" style="position:absolute;left:0;top:0;width:874px;height:16px"><rect x="0.500" y="1.500" width="13" height="13" fill="#f6f6f6" stroke="#c9c9c9" stroke-width="1"/><rect x="14.500" y="1.500" width="13" height="13" fill="#f6f6f6" stroke="#c9c9c9" stroke-width="1"/><rect x="28.500" y="1.500" width="13" height="13" fill="#f6f6f6" stroke="#c9c9c9" stroke-width="1"/><rect x="42.500" y="1.500" width="13" height="13" fill="#f6f6f6" stroke="#c9c9c9" stroke-width="1"/><path d="M4.500 4v8M10.500 4v8l-5-4z" fill="#7c7c7c" stroke="#7c7c7c" stroke-width="1.200" stroke-linejoin="round"/><path d="M24.500 4v8l-5-4z" fill="#7c7c7c"/><path d="M32.500 4v8l5-4z" fill="#7c7c7c"/><path d="M51.500 4v8M45.500 4v8l5-4z" fill="#7c7c7c" stroke="#7c7c7c" stroke-width="1.200" stroke-linejoin="round"/><path d="M56 0h45.500l-5.200 14h-35.100z" fill="#212830"/><path d="M101.500 0.500l-5.200 13h45.700l5.500-13M147.500 0.500l-5.500 13h47.400l5.400-13" fill="#f7f7f7" stroke="#4a4a4a" stroke-width="1"/><rect x="565.500" y="1.500" width="4" height="13" fill="#fff" stroke="#b8b8b8" stroke-width="1"/><path d="M580.500 4v7l-5-3.500z" fill="#1a1a1a"/><path d="M845.500 4v7l5-3.500z" fill="#5e5e5e"/><defs><linearGradient id="gth" x1="0" y1="0" x2="0" y2="1"><stop offset="0" stop-color="#f8f8f8"/><stop offset=".5" stop-color="#dcdcdc"/><stop offset="1" stop-color="#b9b9b9"/></linearGradient></defs><rect x="707.500" y="2" width="14.500" height="12.500" rx="1.500" fill="url(#gth)" stroke="#a2a2a2" stroke-width="1"/></svg><div class="ltab" style="left:67px;color:#fff"><span class="cjm">模型</span></div><div class="ltab" style="left:106px"><span class="cj">布局</span>1</div><div class="ltab" style="left:153px"><span class="cj">布局</span>2</div></div>
<div id="cmd"><div id="cmdgrip"><svg viewBox="0 0 22 58" style="position:absolute;left:0;top:0;width:22px;height:58px"><g fill="#a9a9a9"><rect x="2" y="5" width="2" height="2"/><rect x="5" y="5" width="2" height="2"/><rect x="8" y="5" width="2" height="2"/><rect x="11" y="5" width="2" height="2"/><rect x="14" y="5" width="2" height="2"/><rect x="17" y="5" width="2" height="2"/><rect x="2" y="8.500" width="2" height="2"/><rect x="5" y="8.500" width="2" height="2"/><rect x="8" y="8.500" width="2" height="2"/><rect x="11" y="8.500" width="2" height="2"/><rect x="14" y="8.500" width="2" height="2"/><rect x="17" y="8.500" width="2" height="2"/></g><path d="M6.500 18l7 7M13.500 18l-7 7" stroke="#fafafa" stroke-width="2"/><path transform="translate(0 3)" d="M5.200 38.500c-1-2.300.6-4.600 3.200-4.400l-1.700 2 .8 1.700 2 .2 1.500-2c1.100 2.200-.2 4.200-2 4.500l6.800 7.300c1 1.200-.9 2.900-2 1.700l-6.600-7.400c-.8.1-1.500-.1-2-.6z" fill="#fafafa"/></svg></div>
<div id="hist"><div>EXPLODE <span class="cj">找到</span> 1 <span class="cj">个</span></div><div><span class="cj">命令</span>: '_.zoom _e</div></div>
<div id="cmdin"><svg viewBox="0 0 40 22" style="position:absolute;left:5px;top:0;width:40px;height:22px"><rect x="0.500" y="3.500" width="14" height="13" rx="1" fill="#e4e8ee" stroke="#8c96a6" stroke-width="1"/><path d="M3 6.500l4 3.500-4 3.500" fill="none" stroke="#3c4656" stroke-width="1.500"/><path d="M8 14h4" stroke="#3c4656" stroke-width="1.300"/><path d="M18 9h5.500l-2.750 3z" fill="#8a8a8a"/></svg><span id="ph"><span class="cj">键入命令</span></span></div>
</div>
<div id="status"><div id="coords">6800.6882, 2319.5017, 0.0000</div><div class="sb" style="left:221px"><svg viewBox="0 0 18 18" ><path d="M1 7h11M6.500 1.500v11" stroke="#1c1c1c" stroke-width="1.100"/><rect x="4.500" y="5" width="4" height="4" fill="none" stroke="#1c1c1c" stroke-width="1"/><rect x="10.500" y="9.500" width="3.500" height="3.500" fill="#dbe9f8" stroke="#2b5c9c" stroke-width=".9"/><rect x="8.500" y="13" width="3.500" height="3.500" fill="#fff" stroke="#a5522c" stroke-width=".9"/></svg></div><div class="sb" style="left:243px"><svg viewBox="0 0 18 18" ><path d="M4 4h1M7 4h1M10 4h1M4 7h1M7 7h1M10 7h1M4 10h1M7 10h1" stroke="#1c1c1c" stroke-width="1.200"/><path d="M12.500 4v7.500M3.500 13.500h10" stroke="#1c1c1c" stroke-width="1.400"/></svg></div><div class="sb on" style="left:265px"><svg viewBox="0 0 18 18" ><rect x="1.500" y="1.500" width="15" height="15" fill="#fff" stroke="#2a3346" stroke-width="1.200"/><path d="M4.500 1.500v15M7.500 1.500v15M10.500 1.500v15M13.500 1.500v15M1.500 4.500h15M1.500 7.500h15M1.500 10.500h15M1.500 13.500h15" stroke="#2a3346" stroke-width="1.100"/></svg></div><div class="sb on" style="left:287px"><svg viewBox="0 0 18 18" ><path d="M3.500 1.500v14h13" fill="none" stroke="#1e4458" stroke-width="1.300"/><path d="M3.500 10.500h5v5" fill="none" stroke="#1e4458" stroke-width="1"/></svg></div><div class="sb" style="left:309px"><svg viewBox="0 0 18 18" ><path d="M12 5.500a5 5 0 1 0 1.500 6" fill="none" stroke="#1c1c1c" stroke-width="1.100"/><path d="M6 13h9M6 13l7.500-7.500M11 13v-5" fill="none" stroke="#1c1c1c" stroke-width="1.200"/></svg></div><div class="sb on" style="left:331px"><svg viewBox="0 0 18 18" ><rect x="4.500" y="4.500" width="11" height="11" fill="url(#gg)" stroke="#1c1c1c" stroke-width="1.200"/><circle cx="4" cy="4" r="1.900" fill="#fff" stroke="#c84a1e" stroke-width="1"/></svg></div><div class="sb" style="left:353px"><svg viewBox="0 0 18 18" ><path d="M4 6l3.500-3.500h8.500v8l-3.500 3.500h-8.500z" fill="url(#gg)" stroke="#1c1c1c" stroke-width="1.100"/><path d="M4 6h8.500v8M12.500 6l3.500-3.500" fill="none" stroke="#1c1c1c" stroke-width=".9"/><circle cx="4.500" cy="14" r="2.200" fill="#fff" stroke="#d8681e" stroke-width="1.200"/></svg></div><div class="sb on" style="left:375px"><svg viewBox="0 0 18 18" ><path d="M14.500 4l-10 9.500h11" fill="none" stroke="#1c1c1c" stroke-width="1.300"/><path d="M9 9.500c1.500.8 2 2.500 2 4" fill="none" stroke="#1c1c1c" stroke-width="1"/></svg></div><div class="sb on" style="left:397px"><svg viewBox="0 0 18 18" ><path d="M3.500 1v14.500h13" fill="none" stroke="#1b3a5a" stroke-width="1.200"/><path d="M3.500 15.500l10-10" stroke="#1b3a5a" stroke-width="1.100"/><path d="M1.500 3.500l2-3 2 3M14 13.500l3 2-3 2" fill="none" stroke="#1b3a5a" stroke-width="1"/><path d="M13.500 1l-3 4h2l-1.500 3.500 4.500-5h-2l2-2.500z" fill="#f6c12c" stroke="#a9770c" stroke-width=".6"/></svg></div><div class="sb on" style="left:419px"><svg viewBox="0 0 18 18" ><path d="M2 8.500h9M6.500 3.500v10" stroke="#1c1c1c" stroke-width="1.500"/><rect x="9" y="10" width="6.500" height="3" fill="#fff" stroke="#1c1c1c" stroke-width="1"/></svg></div><div class="sb" style="left:441px"><svg viewBox="0 0 18 18" ><path d="M2 9.500h13.500" stroke="#111" stroke-width="2.400"/><path d="M9 3v12" stroke="#111" stroke-width="1.300"/></svg></div><div class="sb on" style="left:463px"><svg viewBox="0 0 18 18" ><defs><pattern id="chk" width="3" height="3" patternUnits="userSpaceOnUse"><rect width="3" height="3" fill="#9fd0f5"/><rect width="1.500" height="1.500" fill="#e4f3fd"/><rect x="1.500" y="1.500" width="1.500" height="1.500" fill="#e4f3fd"/></pattern></defs><rect x="1.500" y="1.500" width="15" height="15" fill="url(#chk)" stroke="#2f6fc0" stroke-width="1.200"/></svg></div><div class="sb" style="left:485px"><svg viewBox="0 0 18 18" ><rect x="5" y="3" width="8" height="11" fill="#fff" stroke="#111" stroke-width="1.600"/><path d="M7 6h1.500M10 6h1.500M7 8.500h1.500M10 8.500h1.500M7 11h1.500M10 11h1.500" stroke="#111" stroke-width="1.200"/></svg></div><div class="sb" style="left:507px"><svg viewBox="0 0 18 18" ><path d="M1.500 4.500h5M4 2v5" stroke="#1c1c1c" stroke-width="1.100"/><rect x="6" y="6" width="7" height="7" fill="#fff" stroke="#333" stroke-width="1"/><rect x="9" y="9" width="7" height="7" fill="#7fc46a" stroke="#2f6a24" stroke-width="1"/></svg></div><div class="sb" style="left:529px"><svg viewBox="0 0 18 18" ><path d="M6.500 1.500h5v5h5v5h-5v5h-5v-5h-5v-5h5z" fill="#fdfdfd" stroke="#555" stroke-width="1.200"/></svg></div><div style="left:551px;top:3px;width:1px;height:22px;background:#6a6a6a"></div><div class="sbt bx" style="left:593px;width:31px"><span style="position:absolute;left:3px;top:3px;font-size:12px;line-height:14px;color:#0a0a0a;white-space:nowrap"><span class="cjm">模型</span></span></div><div class="sbt bx" style="left:624px;width:22px"><svg viewBox="0 0 18 18" style="position:absolute;left:2px;top:1px;width:18px;height:18px"><rect x="2.500" y="2.500" width="12" height="10" fill="#f4f4f4" stroke="#222" stroke-width="1.200"/><path d="M5 10.500v-6l6 6z" fill="none" stroke="#222" stroke-width="1"/><path d="M2 15.500h14" stroke="#222" stroke-width="1.300"/></svg></div><div class="sbt bx" style="left:646px;width:22px"><svg viewBox="0 0 18 18" style="position:absolute;left:2px;top:1px;width:18px;height:18px"><rect x="1.500" y="2.500" width="6.500" height="6" fill="#f4f4f4" stroke="#222" stroke-width="1.100"/><rect x="9.500" y="2.500" width="6.500" height="6" fill="#f4f4f4" stroke="#222" stroke-width="1.100"/><path d="M1 12h16M1 15h16" stroke="#222" stroke-width="1.500"/></svg></div><div class="sbt bx" style="left:686px;width:55px"><svg viewBox="0 0 18 18" style="position:absolute;left:1px;top:1px;width:18px;height:18px"><path d="M9 1.500l2 7 5 6.500h-3l-4-4.500-4 4.500h-3l5-6.500z" fill="#f6f6f6" stroke="#555" stroke-width=".9"/></svg><span class="serif" style="position:absolute;left:19px;top:3px;font-size:12px;font-weight:bold;color:#0a0a0a;letter-spacing:.3px">1:1</span><div class="tri-d" style="left:42px;top:8px"></div></div><div class="sbt bx" style="left:741px;width:22px"><svg viewBox="0 0 18 18" style="position:absolute;left:2px;top:1px;width:18px;height:18px"><path d="M8 1.500l2 7 4.500 6.500h-3l-3.500-4.500-3.500 4.500h-3l4.500-6.500z" fill="#f6f6f6" stroke="#555" stroke-width=".9"/><circle cx="13" cy="10" r="3" fill="#f7c948" stroke="#a9770c" stroke-width=".7"/></svg></div><div class="sbt bx" style="left:763px;width:22px"><svg viewBox="0 0 18 18" style="position:absolute;left:2px;top:1px;width:18px;height:18px"><path d="M9 1.500l2 7 5 6.500h-3l-4-4.500-4 4.500h-3l5-6.500z" fill="#bdbdbd" stroke="#999" stroke-width=".9"/></svg></div><div class="sbt bx" style="left:789px;width:22px"><svg viewBox="0 0 16 16" style="position:absolute;left:3px;top:3px;width:16px;height:16px"><path d="M6.700 0.800h2.600l.4 2 1.300.6 1.700-1.100 1.800 1.800-1.100 1.700.6 1.300 2 .4v2.600l-2 .4-.6 1.300 1.100 1.700-1.800 1.800-1.700-1.100-1.300.6-.4 2h-2.600l-.4-2-1.300-.6-1.700 1.100-1.800-1.800 1.100-1.700-.6-1.300-2-.4v-2.600l2-.4.600-1.300-1.100-1.700 1.800-1.800 1.700 1.100 1.300-.6z" fill="#fafafa" stroke="#333" stroke-width="1.100"/><circle cx="8" cy="8" r="2.600" fill="#8a8a8a" stroke="#333" stroke-width="1"/><path d="M16 12v4h-4z" fill="#111"/></svg></div><div class="sbt bx" style="left:811px;width:22px"><svg viewBox="0 0 16 16" style="position:absolute;left:2px;top:2px;width:17px;height:17px"><path d="M9 7.500v-3c0-1.800 1.100-3 2.700-3s2.700 1.200 2.700 3v1" fill="none" stroke="#f2f2f2" stroke-width="1.800"/><rect x="1.500" y="7.500" width="10" height="7.500" rx="1" fill="#f4f4f4" stroke="#333" stroke-width="1.200"/><path d="M6.500 9.500v3.500" stroke="#333" stroke-width="1.600"/></svg></div><div class="sbt bx" style="left:833px;width:22px"><svg viewBox="0 0 18 18" style="position:absolute;left:3px;top:1px;width:18px;height:18px"><circle cx="9" cy="9.500" r="7" fill="#6f6f6f" stroke="#555" stroke-width="1"/><path d="M5 5l5.500 7.500" stroke="#e8e8e8" stroke-width="3" stroke-linecap="round"/><path d="M9 1v2M13 2.500l-1 1.500" stroke="#eee" stroke-width="1"/></svg></div><div class="sbt" style="left:861px;width:26px;background:#a2a2a2;border:1px solid #6b6b6b;top:4px;height:20px"><svg viewBox="0 0 12 18" style="position:absolute;left:7px;top:0;width:10px;height:16px"><path d="M6 1c-2.800 0-4.800 2-4.800 4.700 0 2 1.100 3 1.900 4.300.5.800.6 1.500.6 2.500h4.600c0-1 .1-1.700.6-2.500.8-1.300 1.900-2.300 1.900-4.300 0-2.700-2-4.700-4.800-4.700z" fill="#fdf3a6" stroke="#b8a64a" stroke-width=".8"/><rect x="4" y="12.800" width="4" height="3.500" rx=".8" fill="#f7f7f7" stroke="#999" stroke-width=".7"/></svg></div><div class="sbt bx" style="left:891px;width:12px"><div class="tri-d" style="left:2px;top:9px"></div></div><div class="sbt bx" style="left:903px;width:22px"><svg viewBox="0 0 18 18" style="position:absolute;left:2px;top:1px;width:16px;height:16px"><rect x="1.500" y="1.500" width="15" height="15" fill="url(#gg)" stroke="#444" stroke-width="1.100"/><path d="M1.500 3.500h15" stroke="#444" stroke-width="1.500"/></svg></div><svg viewBox="0 0 12 12" style="position:absolute;left:929px;top:11px;width:12px;height:12px"><g fill="#e9e9e9"><rect x="8" y="0" width="2.500" height="2.500"/><rect x="4" y="4" width="2.500" height="2.500"/><rect x="8" y="4" width="2.500" height="2.500"/><rect x="0" y="8" width="2.500" height="2.500"/><rect x="4" y="8" width="2.500" height="2.500"/><rect x="8" y="8" width="2.500" height="2.500"/></g></svg></div>
<svg viewBox="0 0 945 656" role="img" aria-label="头条 @上壹教育CAD教学" style="position:absolute;left:0;top:0;width:945px;height:656px;pointer-events:none;font-family:'Liberation Sans','Noto Sans CJK SC',sans-serif"><title>头条 @上壹教育CAD教学</title><g fill="#0a0a0a" stroke="#0a0a0a" stroke-width="2" stroke-linejoin="round" transform="translate(1 1.200)"><text x="648.3 671.2" y="633.600" font-size="23.600">头条</text><text x="729.8 751.8 774.1 796.5" y="633.600" font-size="23.600">上壹教育</text><text x="879.3 902.1" y="633.600" font-size="23.600">教学</text><text x="700.500" y="633.300" font-size="23.500">@</text><text x="823" y="633" font-size="24.500" letter-spacing="1">CAD</text></g><g fill="#ffffff"><text x="648.3 671.2" y="633.600" font-size="23.600">头条</text><text x="729.8 751.8 774.1 796.5" y="633.600" font-size="23.600">上壹教育</text><text x="879.3 902.1" y="633.600" font-size="23.600">教学</text><text x="700.500" y="633.300" font-size="23.500">@</text><text x="823" y="633" font-size="24.500" letter-spacing="1">CAD</text></g></svg>
</div>
</body></html>
